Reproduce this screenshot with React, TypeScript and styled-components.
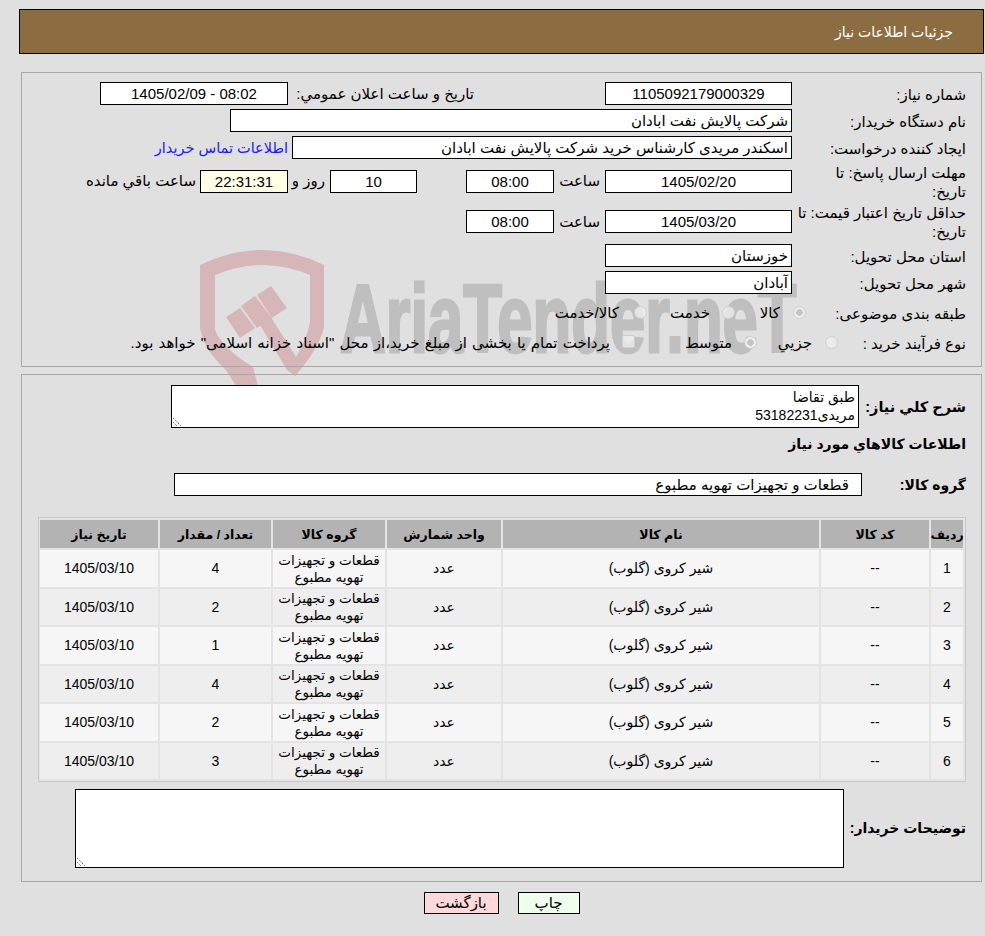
import * as React from "react";
import styled, { createGlobalStyle } from "styled-components";

const Global = createGlobalStyle`
  html, body {
    margin: 0;
    padding: 0;
    background: #e0e0e0;
  }
  body {
    font-family: "Liberation Sans", "DejaVu Sans", sans-serif;
    font-size: 15px;
    color: #000;
  }
`;

const Page = styled.div`
  position: relative;
  width: 985px;
  height: 936px;
  overflow: hidden;
  direction: rtl;
`;

const Watermark = styled.div`
  position: absolute;
  left: 198px;
  top: 250px;
  display: flex;
  direction: ltr;
  gap: 12px;
`;

const ShieldIcon = styled.svg`
  flex: none;
`;

const WatermarkText = styled.span`
  flex: none;
  font-family: "Liberation Sans", sans-serif;
  font-weight: 700;
  font-size: 96px;
  line-height: 104px;
  color: #bfbfbf;
  -webkit-text-stroke: 3px #bfbfbf;
  margin-top: 17px;
  white-space: nowrap;
  transform: scaleX(0.66);
  transform-origin: left center;
`;

const Content = styled.div`
  position: relative;
  padding: 9px 1px 0 19px;
`;

const Header = styled.h1`
  margin: 0;
  height: 43px;
  border: 1px solid #000;
  background: #8c6d42;
  color: #fff;
  font-size: 14px;
  font-weight: 400;
  line-height: 44px;
  padding-right: 30px;
`;

const Panel = styled.section`
  border: 1px solid #a8a8a8;
  margin: 18px 2px 0 2px;
`;

const InfoPanel = styled(Panel)`
  height: 286px;
  padding: 7px 15px 0 0;
`;

const Row = styled.div<{ $h: number }>`
  display: flex;
  align-items: center;
  height: ${(p) => p.$h}px;
`;

const Label = styled.div`
  width: 172px;
  flex: none;
  line-height: 19px;
  padding-top: 1px;
  margin-left: 2px;
`;

const Field = styled.div<{ $w: number; $center?: boolean; $bg?: string; $ltr?: boolean; $mr?: number; $pr?: number }>`
  flex: none;
  box-sizing: border-box;
  width: ${(p) => p.$w}px;
  height: 23px;
  margin-right: ${(p) => p.$mr ?? 0}px;
  border: 1px solid #000;
  background: ${(p) => p.$bg || "#fff"};
  text-align: ${(p) => (p.$center ? "center" : "right")};
  direction: ${(p) => (p.$ltr ? "ltr" : "rtl")};
  line-height: 21px;
  padding: 0 ${(p) => p.$pr ?? 3}px 0 3px;
  white-space: nowrap;
  overflow: hidden;
`;

const Slot = styled.span<{ $w: number; $mr?: number; $ml?: number }>`
  flex: none;
  width: ${(p) => p.$w}px;
  margin-right: ${(p) => p.$mr ?? 0}px;
  margin-left: ${(p) => p.$ml ?? 0}px;
  white-space: nowrap;
`;

const FundingNote = styled(Slot)`
  word-spacing: 1px;
`;

const ContactLink = styled.a`
  color: #1a1aff;
  font-size: 14.5px;
  margin-right: 4px;
  white-space: nowrap;
`;

const Radio = styled.span<{ $on?: boolean; $mr: number }>`
  flex: none;
  box-sizing: border-box;
  width: 13px;
  height: 13px;
  margin-right: ${(p) => p.$mr}px;
  margin-bottom: 2px;
  border-radius: 50%;
  border: 1px solid #cfcfcf;
  background: ${(p) =>
    p.$on ? "radial-gradient(circle, #c4c4c4 0 3px, #ececec 3.5px)" : "rgba(238, 238, 238, 0.8)"};
`;

const CheckBox = styled.span<{ $mr: number }>`
  flex: none;
  box-sizing: border-box;
  width: 13px;
  height: 13px;
  margin-right: ${(p) => p.$mr}px;
  margin-bottom: 3px;
  border: 1px solid #cfcfcf;
  border-radius: 2px;
  background: rgba(238, 238, 238, 0.8);
`;

const DetailPanel = styled(Panel)`
  margin-top: 7px;
  height: 497px;
  padding: 9px 15px 0 15px;
`;

const BoldLabel = styled.div<{ $w?: number; $size?: number }>`
  flex: none;
  width: ${(p) => (p.$w ? `${p.$w}px` : "auto")};
  font-weight: 700;
  font-size: ${(p) => p.$size ?? 14}px;
  white-space: nowrap;
`;

const TextArea = styled.div<{ $w: number; $h: number }>`
  position: relative;
  flex: none;
  box-sizing: border-box;
  width: ${(p) => p.$w}px;
  height: ${(p) => p.$h}px;
  margin-right: 5px;
  border: 1px solid #000;
  background: #fff;
  font-size: 14px;
  line-height: 18px;
  padding: 2px 3px 0;
  overflow: hidden;
`;

const Grip = styled.svg`
  position: absolute;
  left: 1px;
  bottom: 1px;
`;

const TableGap = styled.div`
  height: 7px;
`;

const ItemsTable = styled.div`
  box-sizing: border-box;
  width: 928px;
  border: 1px solid #c8c8c8;
  padding: 2px;
  display: grid;
  grid-template-columns: 32px 108px 316px 114px 112px 111px 118px;
  grid-template-rows: 28px repeat(6, 36.5px);
  gap: 2px;
  background: #e4e4e4;
`;

const HeadCell = styled.div`
  background: #b3b3b3;
  display: flex;
  align-items: center;
  justify-content: center;
  font-weight: 700;
  font-size: 12.5px;
`;

const Cell = styled.div<{ $odd: boolean; $small?: boolean }>`
  background: ${(p) => (p.$odd ? "#f6f6f6" : "#eeeeee")};
  display: flex;
  align-items: center;
  justify-content: center;
  text-align: center;
  font-size: ${(p) => (p.$small ? 13.5 : 14)}px;
  line-height: 17px;
  padding: 1px 3px 0;
`;

const NotesRow = styled(Row)`
  margin-top: 6px;
`;

const Actions = styled.div`
  display: flex;
  justify-content: center;
  gap: 19px;
  margin-top: 10px;
`;

const Button = styled.button<{ $bg: string; $w: number }>`
  width: ${(p) => p.$w}px;
  height: 22px;
  box-sizing: border-box;
  border: 1px solid #000;
  background: ${(p) => p.$bg};
  font: inherit;
  padding: 0;
  color: #000;
`;

const GROUP = "قطعات و تجهیزات تهویه مطبوع";
const rows = [4, 2, 1, 4, 2, 3];
const heads = ["رديف", "کد کالا", "نام کالا", "واحد شمارش", "گروه کالا", "تعداد / مقدار", "تاريخ نياز"];

function ResizeGrip() {
  return (
    <Grip width="9" height="9" viewBox="0 0 9 9">
      <path d="M0 1 L8 9 M0 5 L4 9" stroke="#666" strokeWidth="1" strokeDasharray="1.4 1" fill="none" />
    </Grip>
  );
}

function Shield() {
  return (
    <ShieldIcon width="130" height="140" viewBox="0 0 130 140">
      <g fill="#d6b6b8">
        <path d="M2 15 Q64 -15 126 15 L126 78 Q120 100 97 126 L89 120 Q108 95 112 72 L112 25 Q64 5 17 25 L17 80 Q24 98 55 117 L60 136 L38 136 L28 120 Q6 100 2 78 Z" />
        <path d="M59 70 L72 66 L102 113 L89 120 Z" />
        <path d="M28 67 L42 58 L57 78 L42 88 Z" />
        <path d="M43 56 L57 46 L74 68 L59 78 Z" />
        <path d="M59 45 L73 36 L89 58 L74 68 Z" />
      </g>
    </ShieldIcon>
  );
}

export default function App() {
  return (
    <Page>
      <Global />
      <Watermark>
        <Shield />
        <WatermarkText>AriaTender.neT</WatermarkText>
      </Watermark>
      <Content>
        <Header>جزئیات اطلاعات نیاز</Header>
        <InfoPanel>
          <Row $h={27}>
            <Label>شماره نیاز:</Label>
            <Field $w={187} $center>1105092179000329</Field>
            <Slot $w={181} $mr={131}>تاريخ و ساعت اعلان عمومي:</Slot>
            <Field $w={188} $center $ltr $mr={5}>1405/02/09 - 08:02</Field>
          </Row>
          <Row $h={27}>
            <Label>نام دستگاه خریدار:</Label>
            <Field $w={562}>شرکت پالایش نفت ابادان</Field>
          </Row>
          <Row $h={27}>
            <Label>ایجاد کننده درخواست:</Label>
            <Field $w={500}>اسکندر مریدی کارشناس خرید شرکت پالایش نفت ابادان</Field>
            <ContactLink>اطلاعات تماس خریدار</ContactLink>
          </Row>
          <Row $h={40}>
            <Label>مهلت ارسال پاسخ: تا<br />تاریخ:</Label>
            <Field $w={187} $center>1405/02/20</Field>
            <Slot $w={42} $mr={5} $ml={4}>ساعت</Slot>
            <Field $w={88} $center>08:00</Field>
            <Field $w={87} $center $mr={49}>10</Field>
            <Slot $w={37} $mr={5}>روز و</Slot>
            <Field $w={88} $center $bg="#ffffe8">22:31:31</Field>
            <Slot $w={113} $mr={4}>ساعت باقي مانده</Slot>
          </Row>
          <Row $h={41}>
            <Label>حداقل تاریخ اعتبار قیمت: تا<br />تاریخ:</Label>
            <Field $w={187} $center>1405/03/20</Field>
            <Slot $w={42} $mr={5} $ml={4}>ساعت</Slot>
            <Field $w={88} $center>08:00</Field>
          </Row>
          <Row $h={27}>
            <Label>استان محل تحویل:</Label>
            <Field $w={187}>خوزستان</Field>
          </Row>
          <Row $h={27}>
            <Label>شهر محل تحویل:</Label>
            <Field $w={187}>آبادان</Field>
          </Row>
          <Row $h={34}>
            <Label>طبقه بندی موضوعی:</Label>
            <Radio $on $mr={-14} />
            <Slot $w={20} $mr={13}>کالا</Slot>
            <Radio $mr={25} />
            <Slot $w={40} $mr={12}>خدمت</Slot>
            <Radio $mr={23} />
            <Slot $w={64} $mr={15}>کالا/خدمت</Slot>
          </Row>
          <Row $h={26}>
            <Label>نوع فرآیند خرید :</Label>
            <Radio $mr={-46} />
            <Slot $w={35} $mr={13}>جزيي</Slot>
            <Radio $on $mr={20} />
            <Slot $w={45} $mr={12}>متوسط</Slot>
            <CheckBox $mr={52} />
            <FundingNote $w={480} $mr={12}>پرداخت تمام یا بخشی از مبلغ خرید،از محل "اسناد خزانه اسلامی" خواهد بود.</FundingNote>
          </Row>
        </InfoPanel>
        <DetailPanel>
          <Row $h={45}>
            <BoldLabel $w={102} $size={14.5}>شرح کلي نياز:</BoldLabel>
            <TextArea $w={688} $h={43}>
              طبق تقاضا
              <br />
              مریدی53182231
              <ResizeGrip />
            </TextArea>
          </Row>
          <Row $h={30}>
            <BoldLabel>اطلاعات کالاهاي مورد نياز</BoldLabel>
          </Row>
          <Row $h={51}>
            <BoldLabel $w={65}>گروه کالا:</BoldLabel>
            <Field $w={688} $mr={39} $pr={12}>{GROUP}</Field>
          </Row>
          <TableGap />
          <ItemsTable>
            {heads.map((h) => (
              <HeadCell key={h}>{h}</HeadCell>
            ))}
            {rows.map((qty, i) => {
              const odd = i % 2 === 0;
              return (
                <React.Fragment key={i}>
                  <Cell $odd={odd}>{i + 1}</Cell>
                  <Cell $odd={odd}>--</Cell>
                  <Cell $odd={odd}>شیر کروی (گلوب)</Cell>
                  <Cell $odd={odd}>عدد</Cell>
                  <Cell $odd={odd} $small>{GROUP}</Cell>
                  <Cell $odd={odd}>{qty}</Cell>
                  <Cell $odd={odd}>1405/03/10</Cell>
                </React.Fragment>
              );
            })}
          </ItemsTable>
          <NotesRow $h={80}>
            <BoldLabel $w={117}>توضیحات خریدار:</BoldLabel>
            <TextArea $w={769} $h={79}>
              <ResizeGrip />
            </TextArea>
          </NotesRow>
        </DetailPanel>
        <Actions>
          <Button $bg="#eeffee" $w={62}>چاپ</Button>
          <Button $bg="#ffd9d9" $w={75}>بازگشت</Button>
        </Actions>
      </Content>
    </Page>
  );
}
